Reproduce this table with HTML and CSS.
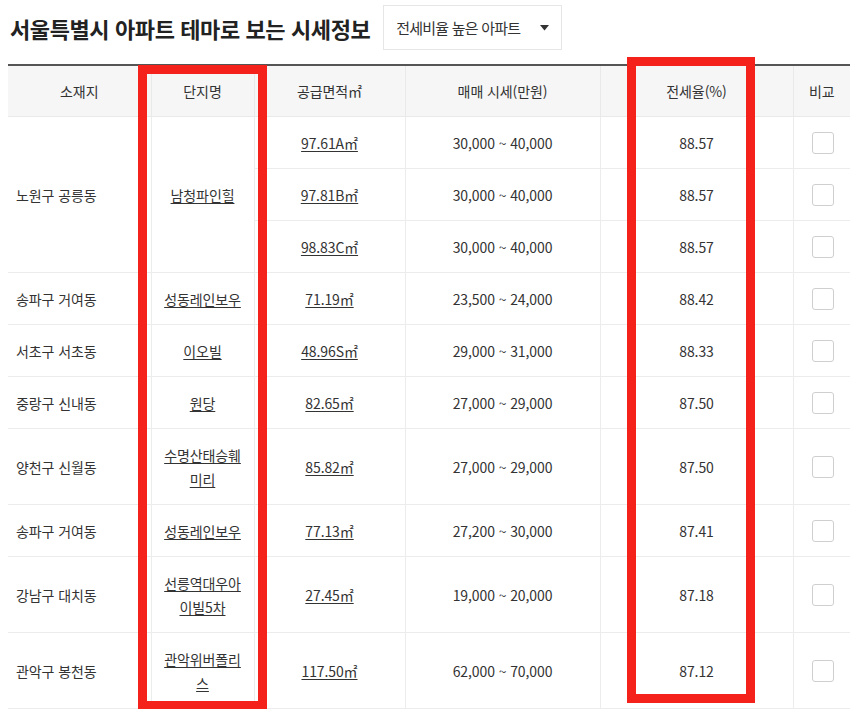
FILE: index.html
```html
<!DOCTYPE html>
<html lang="ko">
<head>
<meta charset="utf-8">
<title>서울특별시 아파트 테마로 보는 시세정보</title>
<link rel="stylesheet" href="styles.css">
</head>
<body>
<div class="page">
  <div class="head">
    <h1 class="title">서울특별시 아파트 테마로 보는 시세정보</h1>
    <div class="select">
      <span class="select-label">전세비율 높은 아파트</span>
      <svg class="caret" width="9" height="6" viewBox="0 0 9 6"><path d="M0 0H9L4.5 5.5Z" fill="#333"/></svg>
    </div>
  </div>
  <div class="table-wrap">
    <table class="grid">
      <colgroup>
        <col class="c-loc"><col class="c-name"><col class="c-area"><col class="c-price"><col class="c-rate"><col class="c-cmp">
      </colgroup>
      <thead>
        <tr><th>소재지</th><th>단지명</th><th>공급면적㎡</th><th>매매 시세(만원)</th><th>전세율(%)</th><th>비교</th></tr>
      </thead>
      <tbody>
        <tr><td class="loc" rowspan="3">노원구 공릉동</td><td class="name" rowspan="3"><a class="link">남청파인힐</a></td><td><a class="link">97.61A㎡</a></td><td>30,000 ~ 40,000</td><td>88.57</td><td><span class="check"></span></td></tr>
        <tr><td><a class="link">97.81B㎡</a></td><td>30,000 ~ 40,000</td><td>88.57</td><td><span class="check"></span></td></tr>
        <tr><td><a class="link">98.83C㎡</a></td><td>30,000 ~ 40,000</td><td>88.57</td><td><span class="check"></span></td></tr>
        <tr><td class="loc">송파구 거여동</td><td class="name"><a class="link">성동레인보우</a></td><td><a class="link">71.19㎡</a></td><td>23,500 ~ 24,000</td><td>88.42</td><td><span class="check"></span></td></tr>
        <tr><td class="loc">서초구 서초동</td><td class="name"><a class="link">이오빌</a></td><td><a class="link">48.96S㎡</a></td><td>29,000 ~ 31,000</td><td>88.33</td><td><span class="check"></span></td></tr>
        <tr><td class="loc">중랑구 신내동</td><td class="name"><a class="link">원당</a></td><td><a class="link">82.65㎡</a></td><td>27,000 ~ 29,000</td><td>87.50</td><td><span class="check"></span></td></tr>
        <tr><td class="loc">양천구 신월동</td><td class="name"><a class="link">수명산태승훼미리</a></td><td><a class="link">85.82㎡</a></td><td>27,000 ~ 29,000</td><td>87.50</td><td><span class="check"></span></td></tr>
        <tr><td class="loc">송파구 거여동</td><td class="name"><a class="link">성동레인보우</a></td><td><a class="link">77.13㎡</a></td><td>27,200 ~ 30,000</td><td>87.41</td><td><span class="check"></span></td></tr>
        <tr><td class="loc">강남구 대치동</td><td class="name"><a class="link">선릉역대우아이빌5차</a></td><td><a class="link">27.45㎡</a></td><td>19,000 ~ 20,000</td><td>87.18</td><td><span class="check"></span></td></tr>
        <tr><td class="loc">관악구 봉천동</td><td class="name"><a class="link">관악위버폴리스</a></td><td><a class="link">117.50㎡</a></td><td>62,000 ~ 70,000</td><td>87.12</td><td><span class="check"></span></td></tr>
      </tbody>
    </table>
    <div class="mark mark-name"></div>
    <div class="mark mark-rate"></div>
  </div>
</div>
</body>
</html>
```

FILE: styles.css
```css
* { box-sizing: border-box; }
html, body { margin: 0; padding: 0; background: #fff; }
body {
  font-family: "Noto Sans CJK KR", "Noto Sans", sans-serif;
  color: #333;
  font-size: 14px;
}
.page { padding: 5px 8px 0; }
.head {
  display: flex;
  align-items: center;
  height: 45px;
  margin-bottom: 14px;
}
.title {
  margin: 0 0 0 2px;
  font-size: 22px;
  font-weight: 700;
  letter-spacing: -0.4px;
  color: #222;
  line-height: 1;
}
.select {
  margin-left: 13px;
  height: 45px;
  width: 179px;
  border: 1px solid #e6e6e6;
  display: flex;
  align-items: center;
  padding: 0 12px 0 12px;
  justify-content: space-between;
}
.select-label {
  font-size: 15px;
  letter-spacing: -0.8px;
  color: #333;
}
.caret { display: block; }
.table-wrap { position: relative; }
.grid {
  width: 842px;
  table-layout: fixed;
  border-collapse: collapse;
  border-left: hidden;
  border-right: hidden;
}
.c-loc { width: 143px; }
.c-name { width: 103px; }
.c-area { width: 151px; }
.c-price { width: 195px; }
.c-rate { width: 193px; }
.c-cmp { width: 57px; }
.grid th {
  background: #f6f6f6;
  border-top: 2px solid #555;
  border-bottom: 1px solid #e9e9e9;
  border-left: 1px solid #e9e9e9;
  border-right: 1px solid #e9e9e9;
  font-weight: 400;
  color: #333;
  line-height: 24px;
  padding: 13px 6px;
  letter-spacing: -0.1px;
  text-align: center;
}
.grid td {
  border: 1px solid #ececec;
  line-height: 24px;
  height: 52px;
  padding: 14px 8px 13px;
  text-align: center;
  letter-spacing: -0.1px;
  color: #333;
  word-break: keep-all;
  overflow-wrap: anywhere;
}
.grid td.loc { text-align: left; padding-left: 8px; }
.grid td.name { padding-left: 8px; padding-right: 8px; }
.link { color: #333; text-decoration: underline; text-underline-offset: 2px; }
.check {
  display: block;
  width: 22px;
  height: 22px;
  border: 1px solid #cfcfcf;
  border-radius: 3px;
  margin: 0 auto;
  position: relative;
  left: 1px;
  background: #fff;
}
.mark {
  position: absolute;
  border: 9px solid #f5221c;
  pointer-events: none;
}
.mark-name { left: 130px; top: 1px; width: 129px; height: 645px; }
.mark-rate { left: 619px; top: -7px; width: 128px; height: 646px; }
```
